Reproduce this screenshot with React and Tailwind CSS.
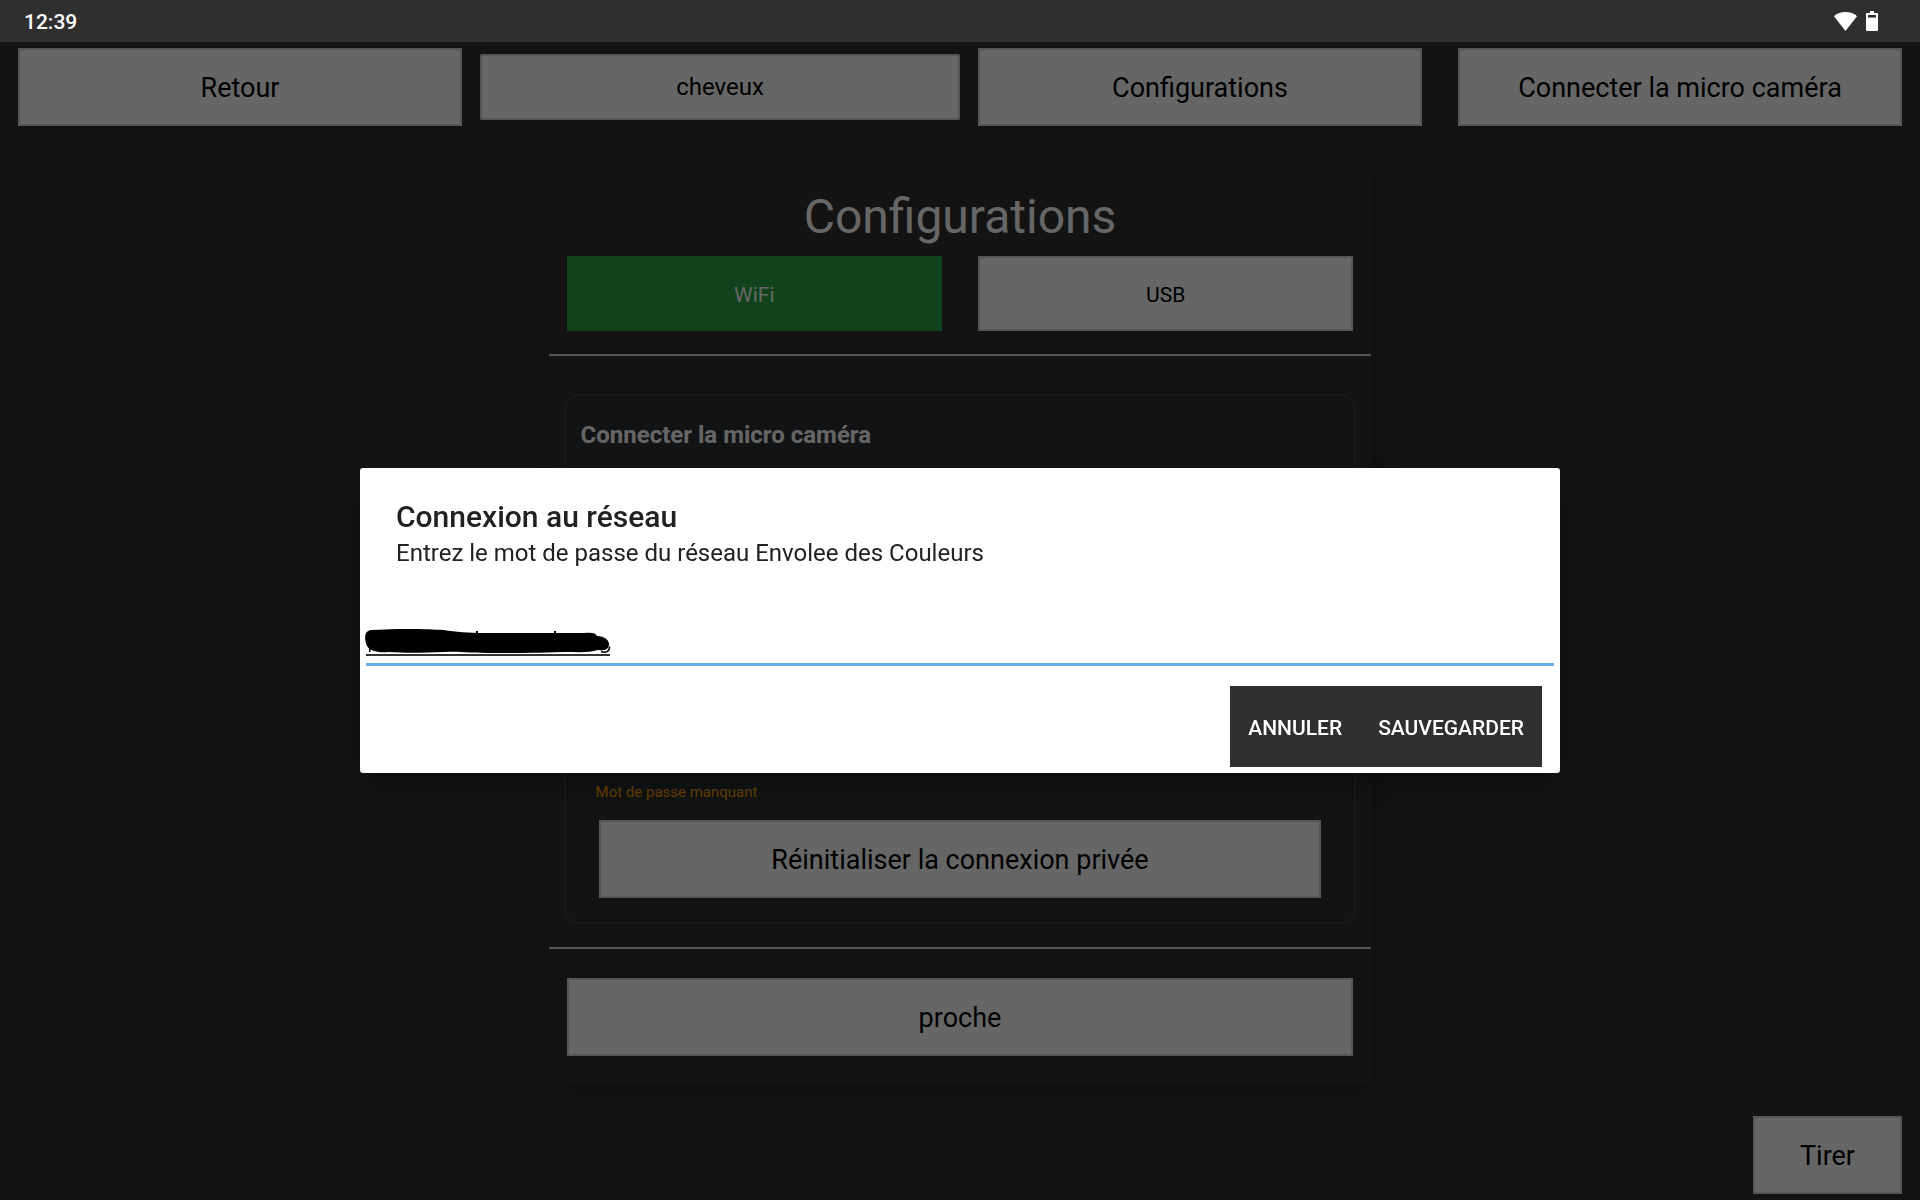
import React, { useState } from 'react';

const BUTTON_BASE = 'bg-white border-2 border-[#d4d4d4] text-black';

const LargeButton = ({ children, className = '' }) => (
  <button type="button" className={`${BUTTON_BASE} h-[78px] pt-0.5 text-[27px] leading-8 ${className}`}>
    {children}
  </button>
);

// ---------- Status bar ----------
const WifiIcon = () => (
  <svg width="23" height="20" viewBox="0 0 23 20" fill="#fff" aria-hidden="true">
    <path d="M11.5 20 0 5.2C3 2.4 7 1 11.5 1S20 2.4 23 5.2z" />
  </svg>
);

const BatteryIcon = () => (
  <svg width="12" height="20" viewBox="0 0 12 20" aria-hidden="true">
    <path d="M4 0h4v2h3a1 1 0 0 1 1 1v16a1 1 0 0 1-1 1H1a1 1 0 0 1-1-1V3a1 1 0 0 1 1-1h3z" fill="#fff" />
    <path d="M2 4h8v2.6H2z" fill="#303030" />
  </svg>
);

const StatusBar = () => (
  <div className="relative z-20 flex h-[42px] items-center justify-between bg-[#2f2f2f] pl-6 pr-[42px] text-white">
    <span className="pt-0.5 text-[21px] font-medium leading-6">12:39</span>
    <div className="flex items-center gap-[9px]">
      <WifiIcon />
      <BatteryIcon />
    </div>
  </div>
);

// ---------- Top toolbar ----------
const Toolbar = () => (
  <nav className="grid grid-cols-4 items-center pt-1.5">
    <LargeButton className="mx-[18px]">Retour</LargeButton>
    <button type="button" className={`${BUTTON_BASE} h-[66px] rounded-xs text-2xl`}>
      cheveux
    </button>
    <LargeButton className="mx-[18px]">Configurations</LargeButton>
    <LargeButton className="mx-[18px]">Connecter la micro caméra</LargeButton>
  </nav>
);

// ---------- Settings card ----------
const SettingsCard = () => {
  const [mode, setMode] = useState('WiFi');

  return (
    <section className="col-start-2 flex flex-col rounded-[3px] bg-[#303030] pt-[33px] pb-[30px] shadow-[8px_12px_24px_rgba(0,0,0,0.15)]">
      <h1 className="text-center text-5xl leading-[56px] text-white">Configurations</h1>

      <div className="mt-[11px] grid grid-cols-2">
        {['WiFi', 'USB'].map((m) => (
          <button
            key={m}
            type="button"
            onClick={() => setMode(m)}
            className={`mx-[18px] h-[75px] pt-0.5 text-[21px] leading-6 ${
              m === mode ? 'bg-[#28a745] text-white' : BUTTON_BASE
            }`}
          >
            {m}
          </button>
        ))}
      </div>

      <hr className="mt-[23px] border-t-2 border-[#d3d3d3]" />

      <div className="mx-[15px] mt-[38px] mb-[23px] flex flex-1 flex-col rounded-[15px] border-2 border-[#3a3e3f] bg-[#2d3032] pt-[25px] pb-6">
        <h2 className="px-[15px] text-2xl leading-7 font-bold text-white">Connecter la micro caméra</h2>
        <p className="mt-auto mb-[18px] px-[30px] text-[15px] leading-5 text-[#ffa500]">Mot de passe manquant</p>
        <LargeButton className="mx-[33px]">Réinitialiser la connexion privée</LargeButton>
      </div>

      <hr className="border-t-2 border-[#d3d3d3]" />

      <LargeButton className="mx-[18px] mt-[29px]">proche</LargeButton>
    </section>
  );
};

// Black marker stroke hiding the typed password
const Redaction = () => (
  <svg
    className="pointer-events-none absolute left-[-2px] bottom-[10px]"
    width="250"
    height="30"
    viewBox="0 0 250 30"
    aria-hidden="true"
  >
    <defs>
      <filter id="soft" x="-5%" y="-20%" width="110%" height="140%">
        <feGaussianBlur stdDeviation="0.7" />
      </filter>
    </defs>
    <path
      filter="url(#soft)"
      d="M7 4C30 2.500 62 2.500 80 4C92 6 104 7 120 7H220C228 6 232 7 233 10C240 10 245 14 245 18C245 24 240 25 234 24C225 27 214 26 200 26C170 27 150 27 130 27C105 27 96 25 80 26C58 27 40 27 24 26C14 27 6 25 3 20C0 13 0 5 7 4Z"
    />
    <path d="M112 5h2v4h-2zM190 5h2v4h-2zM5 22h1.500v4H5z" />
    <path d="M237 25.500C242 27.500 246 25 245.500 20.500" fill="none" stroke="#000" strokeWidth="1.500" />
  </svg>
);

// ---------- Network password dialog ----------
const PasswordDialog = () => (
  <div className="fixed inset-0 z-10 flex items-center justify-center bg-black/60 pt-[41px]">
    <div
      role="dialog"
      aria-labelledby="dialog-title"
      className="w-5/8 rounded-[3px] bg-white px-1.5 pt-[31px] pb-1.5 text-[#212121] shadow-[0_12px_36px_rgba(0,0,0,0.3)]"
    >
      <h2 id="dialog-title" className="px-[30px] text-3xl leading-9 font-medium">
        Connexion au réseau
      </h2>
      <label htmlFor="network-password" className="mt-0.5 block px-[30px] text-2xl leading-8">
        Entrez le mot de passe du réseau Envolee des Couleurs
      </label>

      <div className="relative mt-[50px]">
        <input
          id="network-password"
          type="text"
          className="block h-[47px] w-full border-b-[3px] border-[#6aabe4] text-2xl outline-none"
        />
        <Redaction />
        <span className="absolute bottom-[10px] left-0 h-0.5 w-[244px] bg-[#333]" />
      </div>

      <div className="mt-5 mr-3 flex justify-end">
        <div className="flex h-[81px] items-center gap-9 bg-[#303030] px-[18px] pt-0.5 text-[21px] leading-6 font-medium text-white">
          <button type="button">ANNULER</button>
          <button type="button">SAUVEGARDER</button>
        </div>
      </div>
    </div>
  </div>
);

export default function App() {
  return (
    <div className="flex min-h-screen flex-col bg-[#303030] font-['Roboto',sans-serif]">
      <StatusBar />
      <Toolbar />
      <main className="my-[30px] grid flex-1 grid-cols-[2fr_3fr_2fr]">
        <SettingsCard />
      </main>
      <div className="flex justify-end px-[18px] pb-1.5">
        <LargeButton className="px-[45px]">Tirer</LargeButton>
      </div>
      <PasswordDialog />
    </div>
  );
}
